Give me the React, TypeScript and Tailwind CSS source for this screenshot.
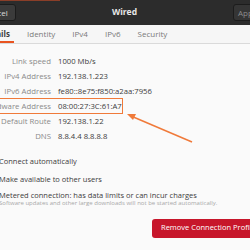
import React from "react";

const font = { fontFamily: '"Open Sans", "Liberation Sans", sans-serif' };

function Row({ label, value }: { label: string; value: string }) {
  return (
    <div className="flex h-[15px] items-center">
      <div className="flex w-[51px] shrink-0 justify-end">
        <div className="shrink-0 text-[7.8px] text-[#8a8a8a] whitespace-nowrap">{label}</div>
      </div>
      <div className="ml-[7px] text-[7.7px] text-[#3c3c3c] whitespace-nowrap">{value}</div>
    </div>
  );
}

export default function App() {
  return (
    <div className="relative h-[250px] w-[250px] overflow-hidden bg-[#fafafa]" style={font}>
      {/* header */}
      <div className="relative flex h-[25px] items-center bg-[#2c2c2c]">
        <div className="absolute left-0 top-0 h-[1px] w-[60px] bg-[#8a3e28]" />
        <div className="ml-[-25px] flex h-[17px] w-[41px] items-center justify-center rounded-[3px] border border-[#1c1c1c] bg-[#3b3b3b] text-[8px] text-[#dcdcdc]">
          Cancel
        </div>
        <div className="flex-1 text-center text-[8.5px] font-bold text-[#e8e8e8]">Wired</div>
        <div className="mr-[-14px] flex h-[17px] w-[31px] items-center justify-center rounded-[3px] border border-[#1c1c1c] bg-[#353535] text-[8px] text-[#8c8c8c]">
          Apply
        </div>
      </div>
      {/* tabs */}
      <div className="flex h-[19px] items-stretch border-b border-[#dadada] bg-[#f6f6f6] text-[8px] text-[#7a7a7a]">
        <div className="relative ml-[-22px] flex w-[36px] items-center justify-center font-bold text-[#3c3c3c]">
          Details
          <div className="absolute bottom-0 left-0 right-0 h-[2px] bg-[#e95420]" />
        </div>
        <div className="ml-[13px] flex items-center">Identity</div>
        <div className="ml-[17px] flex items-center">IPv4</div>
        <div className="ml-[17px] flex items-center">IPv6</div>
        <div className="ml-[17px] flex items-center">Security</div>
      </div>
      {/* details */}
      <div className="mt-[10px] flex flex-col">
        <Row label="Link speed" value="1000 Mb/s" />
        <Row label="IPv4 Address" value="192.138.1.223" />
        <Row label="IPv6 Address" value="fe80::8e75:f850:a2aa:7956" />
        <div className="relative">
          <Row label="Hardware Address" value="08:00:27:3C:61:A7" />
          <div className="absolute left-[-4px] top-[-1px] h-[16px] w-[127px] border-[1.5px] border-[#f07a3a]" />
        </div>
        <Row label="Default Route" value="192.138.1.22" />
        <Row label="DNS" value="8.8.4.4 8.8.8.8" />
      </div>
      <div className="mt-[12px] flex flex-col text-[7.5px] text-[#3c3c3c]">
        <div className="ml-[-1px] h-[18px] leading-[10px] whitespace-nowrap">Connect automatically</div>
        <div className="ml-[-1px] h-[16px] leading-[10px] whitespace-nowrap">Make available to other users</div>
        <div className="ml-[-1px] h-[9px] leading-[10px] whitespace-nowrap">Metered connection: has data limits or can incur charges</div>
        <div className="ml-[-1px] text-[6px] leading-[8px] text-[#a8a8a8] whitespace-nowrap">
          Software updates and other large downloads will not be started automatically.
        </div>
      </div>
      <div className="mt-[11.5px] flex">
        <div className="ml-[152px] flex h-[19px] w-[120px] shrink-0 items-center rounded-[3px] bg-[#c7162b] pl-[9px] text-[7.5px] text-white whitespace-nowrap">
          Remove Connection Profile
        </div>
      </div>
      {/* arrow */}
      <svg className="absolute left-0 top-0" width="250" height="250" viewBox="0 0 250 250">
        <line x1="192" y1="142" x2="131" y2="116" stroke="#f07a3a" strokeWidth="1.5" />
        <polygon points="127,114 136,114 133,120" fill="#f07a3a" />
      </svg>
    </div>
  );
}
